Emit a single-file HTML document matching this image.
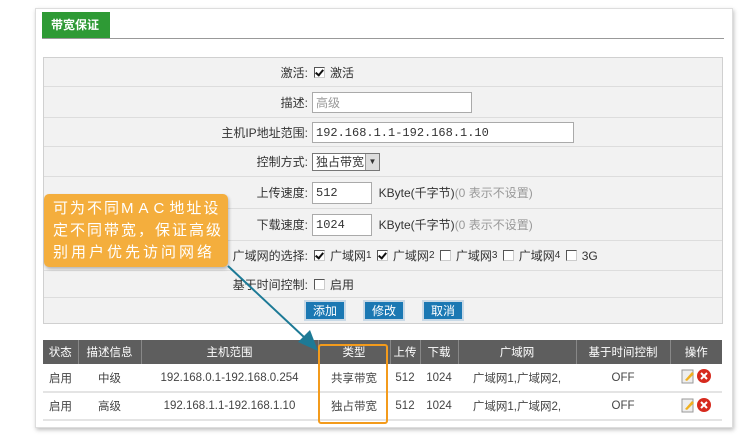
<!DOCTYPE html>
<html><head><meta charset="utf-8"><style>
*{margin:0;padding:0;box-sizing:border-box}
body{width:750px;height:447px;background:#fff;font-family:"Liberation Sans","Noto Sans CJK SC",sans-serif;font-size:12px;color:#333;position:relative;overflow:hidden}
.panel{position:absolute;left:35px;top:8px;width:698px;height:420px;background:#fff;border:1px solid #ddd;box-shadow:1px 2px 4px rgba(0,0,0,.25)}
.tab{position:absolute;left:42px;top:12px;width:68px;height:27px;background:#2e9a35;color:#fff;font-weight:bold;font-size:12px;line-height:27px;padding-left:9px}
.tline{position:absolute;left:42px;top:38px;width:682px;height:1px;background:#999}
.form{position:absolute;left:43px;top:57px;width:680px;border:1px solid #d0d0d0;background:#f2f2f2}
.row{position:relative;border-bottom:1px solid #ddd}
.row:last-child{border-bottom:none}
.lab{position:absolute;right:414px;top:0;bottom:0;display:flex;align-items:center;white-space:nowrap}
.ctl{position:absolute;left:268px;top:0;bottom:0;display:flex;align-items:center;white-space:nowrap}
.inp{border:1px solid #aaa;background:#fff;height:21px;font-family:"Liberation Mono","Noto Sans CJK SC",monospace;font-size:12px;padding:2px 3px;line-height:16px}
.cb{display:inline-block;width:11px;height:11px;border:1px solid #555;border-right-color:#ccc;border-bottom-color:#ccc;background:#fff;margin:0 5px 0 2px;position:relative;vertical-align:middle}
.cb.on::after{content:"";position:absolute;left:2px;top:0px;width:3px;height:6px;border:solid #111;border-width:0 2px 2px 0;transform:rotate(40deg)}
.gray{color:#999}
.btn{display:inline-block;width:42px;height:21px;background:#1b78b3;color:#fff;text-align:center;line-height:19px;border:2px solid #c9d9e6;font-size:12px}
.tip{position:absolute;left:44px;top:194px;width:184px;height:73px;background:#f4ae3d;border-radius:5px;box-shadow:1px 2px 3px rgba(0,0,0,.25);color:#fff;font-size:15px;line-height:22px;padding:4px 0 0 9px;letter-spacing:2px;white-space:nowrap}
.tip .m{letter-spacing:5px}
table{position:absolute;left:43px;top:340px;width:679px;border-collapse:collapse;font-size:11.5px}
th{background:#5e5e5e;color:#fff;font-weight:normal;height:24px;border-left:1px solid #888}
td{height:28px;text-align:center;border-bottom:2px solid #e4e4e4;color:#444}
.box{position:absolute;left:318px;top:344px;width:70px;height:80px;border:2px solid #f39b1c;border-radius:3px}
</style></head><body>
<div class="panel"></div>
<div class="tab">带宽保证</div>
<div class="tline"></div>
<div class="form">
<div class="row" style="height:29px"><div class="lab">激活:</div><div class="ctl"><span class="cb on"></span>激活</div></div>
<div class="row" style="height:31px"><div class="lab">描述:</div><div class="ctl"><div class="inp gray" style="width:160px;font-family:'Liberation Sans','Noto Sans CJK SC',sans-serif">高级</div></div></div>
<div class="row" style="height:29px"><div class="lab">主机IP地址范围:</div><div class="ctl"><div class="inp" style="width:262px">192.168.1.1-192.168.1.10</div></div></div>
<div class="row" style="height:30px"><div class="lab">控制方式:</div><div class="ctl"><div style="border:1px solid #777;background:#fff;height:18px;width:68px;font-size:12px;line-height:16px;padding-left:3px;position:relative">独占带宽<span style="position:absolute;right:0;top:0;width:14px;height:16px;background:#ddd;border-left:1px solid #999;font-size:8px;text-align:center">▼</span></div></div></div>
<div class="row" style="height:32px"><div class="lab">上传速度:</div><div class="ctl"><div class="inp" style="width:60px;height:22px">512</div>&nbsp;&nbsp;KByte(千字节)<span class="gray">(0 表示不设置)</span></div></div>
<div class="row" style="height:32px"><div class="lab">下载速度:</div><div class="ctl"><div class="inp" style="width:60px;height:22px">1024</div>&nbsp;&nbsp;KByte(千字节)<span class="gray">(0 表示不设置)</span></div></div>
<div class="row" style="height:30px"><div class="lab">广域网的选择:</div><div class="ctl"><span class="cb on"></span>广域网<small>1</small>&nbsp;<span class="cb on"></span>广域网<small>2</small>&nbsp;<span class="cb"></span>广域网<small>3</small>&nbsp;<span class="cb"></span>广域网<small>4</small>&nbsp;<span class="cb"></span>3G</div></div>
<div class="row" style="height:27px"><div class="lab">基于时间控制:</div><div class="ctl"><span class="cb"></span>启用</div></div>
<div class="row" style="height:25px"><div class="ctl" style="left:260px"><span class="btn">添加</span><span class="btn" style="margin-left:17px">修改</span><span class="btn" style="margin-left:17px">取消</span></div></div>
</div>
<div class="tip">可为不同<span class="m">MAC</span>地址设<br>定不同带宽，保证高级<br><span style="letter-spacing:3px">别用户优先访问网络</span></div>
<table>
<tr><th style="width:35px;border-left:none">状态</th><th style="width:63px">描述信息</th><th style="width:177px">主机范围</th><th style="width:72px">类型</th><th style="width:30px">上传</th><th style="width:38px">下载</th><th style="width:118px">广域网</th><th style="width:94px">基于时间控制</th><th>操作</th></tr>
<tr><td>启用</td><td>中级</td><td>192.168.0.1-192.168.0.254</td><td>共享带宽</td><td>512</td><td>1024</td><td>广域网1,广域网2,</td><td>OFF</td><td><svg width="34" height="16"><rect x="3" y="2" width="11" height="13" fill="#eee" stroke="#999"/><path d="M6 12 L13 4 L15 6 L8 13 Z" fill="#f0b020"/><circle cx="25" cy="8" r="7" fill="#d62a1e"/><path d="M22 5 L28 11 M28 5 L22 11" stroke="#fff" stroke-width="2"/></svg></td></tr>
<tr><td>启用</td><td>高级</td><td>192.168.1.1-192.168.1.10</td><td>独占带宽</td><td>512</td><td>1024</td><td>广域网1,广域网2,</td><td>OFF</td><td><svg width="34" height="16"><rect x="3" y="2" width="11" height="13" fill="#eee" stroke="#999"/><path d="M6 12 L13 4 L15 6 L8 13 Z" fill="#f0b020"/><circle cx="25" cy="8" r="7" fill="#d62a1e"/><path d="M22 5 L28 11 M28 5 L22 11" stroke="#fff" stroke-width="2"/></svg></td></tr>
</table>
<div class="box"></div>
<svg style="position:absolute;left:0;top:0" width="750" height="447"><line x1="228" y1="266" x2="305" y2="338" stroke="#1d7a96" stroke-width="2"/><path d="M318 351 L298 342 L310 330 Z" fill="#1d7a96"/></svg>
</body></html>
